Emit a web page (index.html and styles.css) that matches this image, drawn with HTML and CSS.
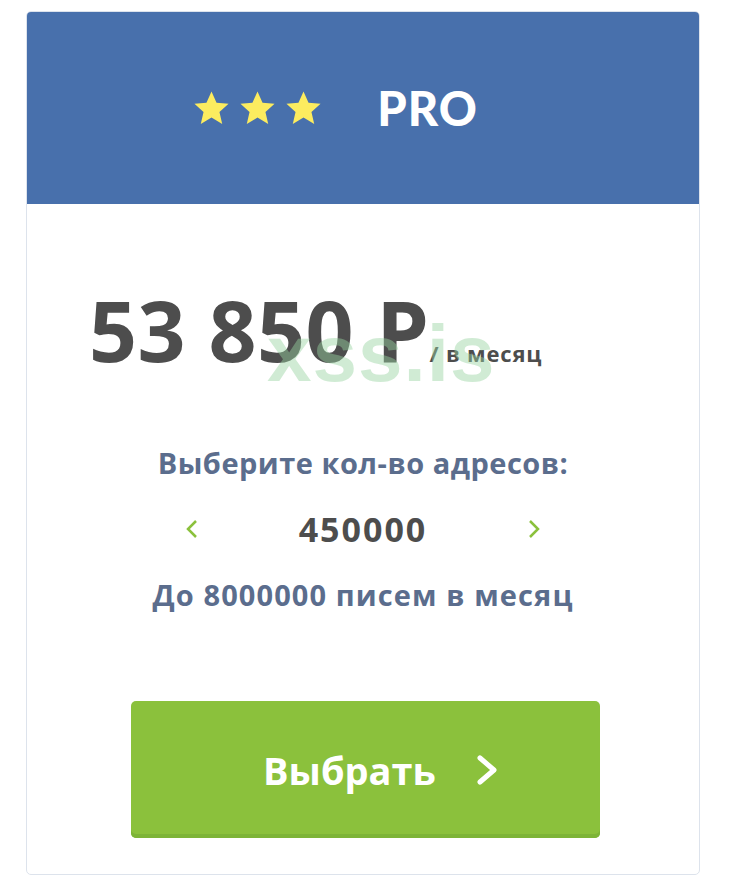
FILE: index.html
```html
<!DOCTYPE html>
<html>
<head>
    <meta charset="UTF-8">
    <title>Тариф PRO</title>
    <link rel="stylesheet" href="styles.css">
</head>
<body>
    <div class="card">
        <div class="card-head">
            <div class="stars">
                <svg viewBox="0 0 24 24"><path d="M12 1.5l3.1 6.9 7.4.7-5.6 5 1.7 7.4L12 17.6l-6.6 3.9 1.7-7.4-5.6-5 7.4-.7z"/></svg>
                <svg viewBox="0 0 24 24"><path d="M12 1.5l3.1 6.9 7.4.7-5.6 5 1.7 7.4L12 17.6l-6.6 3.9 1.7-7.4-5.6-5 7.4-.7z"/></svg>
                <svg viewBox="0 0 24 24"><path d="M12 1.5l3.1 6.9 7.4.7-5.6 5 1.7 7.4L12 17.6l-6.6 3.9 1.7-7.4-5.6-5 7.4-.7z"/></svg>
            </div>
            <span class="plan">PRO</span>
        </div>

        <div class="card-body">
            <div class="price">
                <span class="sum">53 850 Р</span><span class="per">/ в месяц</span>
                <span class="mark">xss.is</span>
            </div>

            <p class="label">Выберите кол-во адресов:</p>
            <div class="counter">
                <svg class="arrow" viewBox="0 0 14 22"><path d="M11 3L3 11l8 8"/></svg>
                <span class="count">450000</span>
                <svg class="arrow" viewBox="0 0 14 22"><path d="M3 3l8 8-8 8"/></svg>
            </div>
            <p class="label note">До 8000000 писем в месяц</p>

            <!-- кнопка выбора тарифа -->
            <a class="btn" href="#">
                Выбрать
                <svg viewBox="0 0 22 32"><path d="M4 4l14 12L4 28"/></svg>
            </a>
        </div>
    </div>
</body>
</html>
```

FILE: styles.css
```css
body {
    margin: 0;
    padding: 11px 0 0 26px;
    font-family: "Open Sans", "Noto Sans", sans-serif;
    background-color: #fff;
}

.card {
    width: 672px;
    height: 862px;
    border: 1px solid #dde3ec;
    border-radius: 5px;
    overflow: hidden;
}

.card-head {
    height: 192px;
    background-color: #4870ac;
    display: flex;
    align-items: center;
    justify-content: center;
    padding-right: 56px;
    gap: 54px;
}

.stars {
    display: flex;
    gap: 7px;
}

.stars svg {
    width: 39px;
    height: 39px;
    fill: #fcec5f;
}

.plan {
    color: #fff;
    font-family: Lato, sans-serif;
    font-size: 47px;
    font-weight: 900;
    letter-spacing: 1px;
}

.card-body {
    display: flex;
    flex-direction: column;
    align-items: center;
}

.price {
    position: relative;
    align-self: flex-start;
    margin: 84px 0 0 62px;
    color: #4d4d4d;
    white-space: nowrap;
}

.sum {
    font-size: 84px;
    font-weight: 700;
    line-height: 1;
    letter-spacing: 0.5px;
}

.per {
    font-size: 22px;
    font-weight: 700;
    letter-spacing: 0.8px;
}

.mark {
    position: absolute;
    left: 178px;
    top: 20px;
    font-family: "Liberation Sans", sans-serif;
    font-size: 80px;
    font-weight: 700;
    color: rgba(150, 210, 160, 0.45);
    letter-spacing: 1px;
}

.label {
    margin: 71px 0 0;
    color: #5b6d8d;
    font-size: 29px;
    font-weight: 700;
    letter-spacing: 0.5px;
}

.counter {
    display: flex;
    align-items: center;
    justify-content: space-between;
    width: 356px;
    margin-top: 24px;
}

.arrow {
    width: 14px;
    height: 22px;
    fill: none;
    stroke: #8bc13c;
    stroke-width: 2.5;
}

.count {
    color: #4d4d4d;
    font-size: 34px;
    font-weight: 700;
    letter-spacing: 2px;
}

.label.note {
    margin-top: 23px;
    letter-spacing: 1.1px;
}

.btn {
    display: flex;
    align-items: center;
    justify-content: center;
    gap: 40px;
    width: 469px;
    height: 137px;
    margin: 87px 0 0 5px;
    box-sizing: border-box;
    padding-left: 30px;
    background-color: #8bc13c;
    box-shadow: inset 0 -4px 0 #7db437;
    border-radius: 5px;
    color: #fff;
    font-size: 38px;
    font-weight: 700;
    text-decoration: none;
}

.btn svg {
    width: 22px;
    height: 32px;
    fill: none;
    stroke: #fff;
    stroke-width: 5;
    stroke-linecap: round;
    stroke-linejoin: round;
}
```
